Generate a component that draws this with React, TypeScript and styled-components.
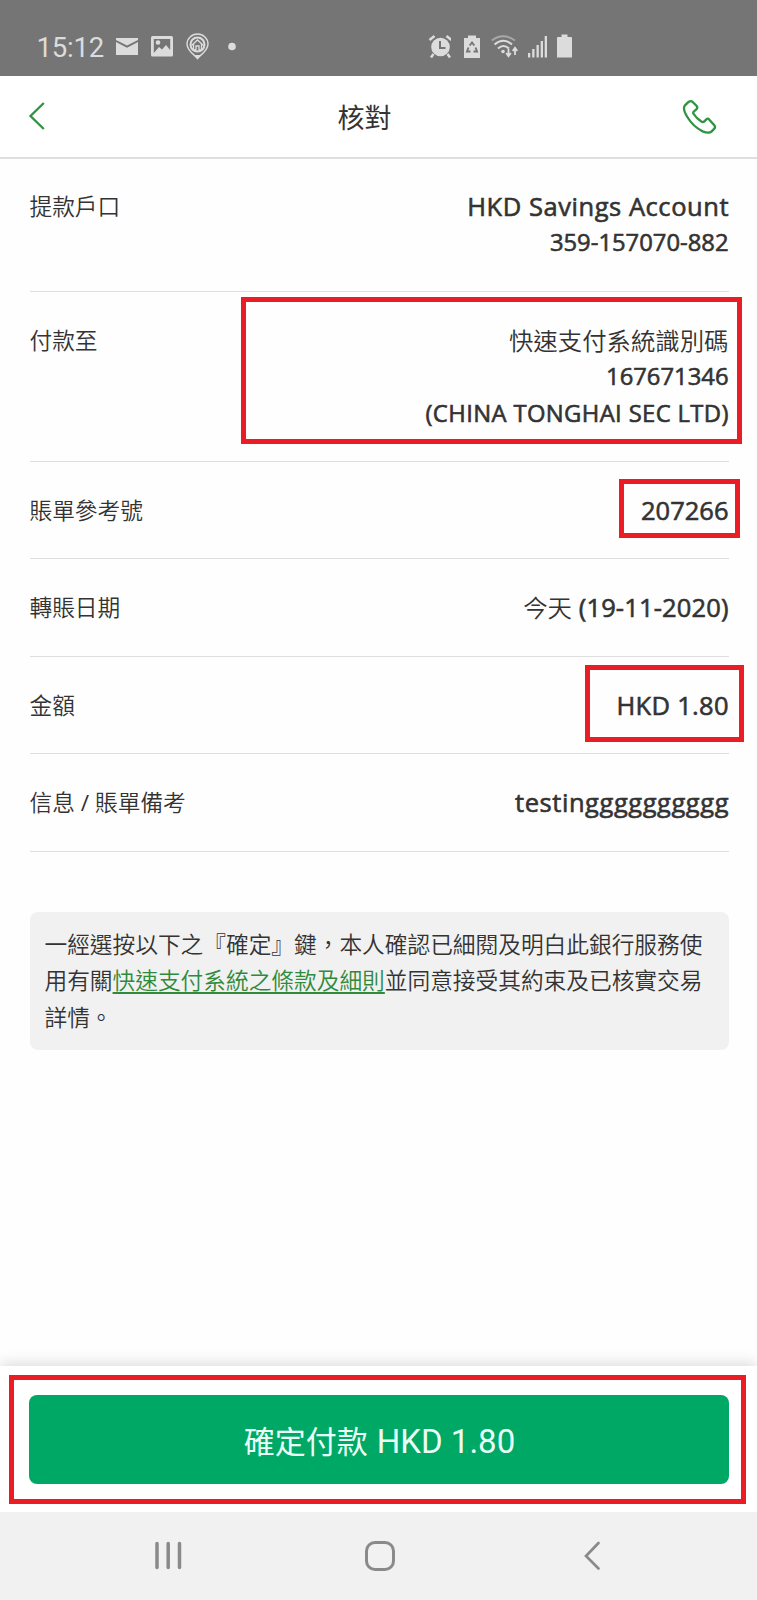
import React from "react";
import styled, { createGlobalStyle } from "styled-components";

const GlobalStyle = createGlobalStyle`
  * { box-sizing: border-box; }
  body {
    margin: 0;
    background: #fefefe;
    color: #333;
    font-family: "Open Sans", "Noto Sans CJK TC", sans-serif;
  }
`;

const Screen = styled.div`
  width: 757px;
  height: 1600px;
  display: flex;
  flex-direction: column;
  overflow: hidden;
  background: #fefefe;
`;

const StatusBar = styled.div`
  flex: none;
  display: flex;
  height: 76px;
  padding: 33px 184px 0 36.5px;
  justify-content: space-between;
  background: #757575;
  color: #dcdcdc;
`;

const StatusGroup = styled.div<{ $gap: number }>`
  display: flex;
  height: 28px;
  gap: ${(p) => p.$gap}px;
`;

const Clock = styled.span`
  width: 66px;
  font: 400 27.5px/29px Roboto, sans-serif;
  letter-spacing: -0.2px;
  white-space: nowrap;
`;

const Glyph = styled.svg`
  display: block;
  flex: none;
`;

const Header = styled.header`
  flex: none;
  display: grid;
  grid-template-columns: 60px 1fr 60px;
  align-items: center;
  height: 83px;
  padding: 0 28px;
  border-bottom: 2px solid #dfdfdf;
  background: #fff;
`;

const Title = styled.h1`
  margin: 0;
  padding: 3px 28px 0 0;
  font-size: 27px;
  font-weight: 400;
  line-height: 40px;
  text-align: center;
`;

const IconButton = styled.button<{ $end?: boolean }>`
  display: flex;
  justify-content: ${(p) => (p.$end ? "flex-end" : "flex-start")};
  padding: 0 ${(p) => (p.$end ? 11 : 0)}px 1px 0;
  border: 0;
  background: none;
`;

const Content = styled.main`
  flex: 1;
  margin-top: -1px;
  padding: 0 28.5px 0 29.5px;
`;

const Row = styled.div`
  position: relative;
  display: flex;
  justify-content: space-between;
  padding: 30px 0;
  border-bottom: 1px solid #dedede;
  line-height: 36.4px;
`;

const Label = styled.div`
  padding-top: 1px;
  height: 36.4px;
  font-size: 22.7px;
  font-weight: 350;
`;

const Slash = styled.span`
  font-weight: 400;
`;

const Values = styled.div`
  display: flex;
  flex-direction: column;
  align-items: flex-end;
`;

const Value = styled.div<{ $size?: number; $track?: number }>`
  height: 36.4px;
  font-size: ${(p) => p.$size ?? 25.5}px;
  font-weight: 400;
  -webkit-text-stroke: 0.6px currentColor;
  letter-spacing: ${(p) => p.$track ?? 0}px;
  margin-right: ${(p) => -(p.$track ?? 0)}px;
  white-space: nowrap;
`;

const Han = styled.span`
  font-size: 24.4px;
  font-weight: 350;
  letter-spacing: 0;
  -webkit-text-stroke: 0;
`;

const Highlight = styled.div<{ $top: number; $right: number; $w: number; $h: number }>`
  position: absolute;
  top: ${(p) => p.$top}px;
  right: ${(p) => p.$right}px;
  width: ${(p) => p.$w}px;
  height: ${(p) => p.$h}px;
  border: 5px solid #ea1d25;
  pointer-events: none;
`;

const Notice = styled.p`
  height: 138px;
  margin: 60px 0 0;
  padding: 15.5px 15px;
  border-radius: 8px;
  background: #f1f1f1;
  font-size: 22.7px;
  font-weight: 350;
  line-height: 36.4px;
`;

const TermsLink = styled.a`
  color: #2f8a3c;
  text-decoration: underline;
  text-decoration-thickness: 2px;
  text-underline-offset: 3px;
`;

const Footer = styled.footer`
  position: relative;
  flex: none;
  height: 146px;
  padding: 29px 28px 0 29px;
  background: #fff;
  box-shadow: 0 -2px 14px rgba(0, 0, 0, 0.15);
`;

const PayButton = styled.button`
  display: flex;
  align-items: center;
  justify-content: center;
  width: 100%;
  height: 89px;
  padding: 0 0 0 1px;
  border: 0;
  border-radius: 8px;
  background: #00a866;
  color: #e9fff6;
  gap: 9px;
`;

const PayLabel = styled.span`
  font: 400 31px/48px "Noto Sans CJK TC", sans-serif;
`;

const PayAmount = styled.span`
  padding-top: 5px;
  font: 400 33px/48px Roboto, sans-serif;
`;

const NavBar = styled.nav`
  position: relative;
  flex: none;
  display: grid;
  grid-template-columns: 1fr 30px 1fr;
  align-items: center;
  height: 88px;
  padding: 0 156px 0 158px;
  background: #f1f1f1;

  & > :first-child {
    margin-left: -4px;
  }
  & > :last-child {
    justify-self: end;
  }
`;

function StatusIcons() {
  return (
    <StatusBar>
      <StatusGroup $gap={13}>
        <Clock>15:12</Clock>
        <Glyph width="22" height="28" viewBox="0 0 22 28" fill="currentColor">
          <path d="M0 5h22v2L11 12.5 0 7z" />
          <path d="M0 9l11 5.8L22 9v13H0z" />
        </Glyph>
        <Glyph width="22" height="28" viewBox="0 0 22 28">
          <rect x="0" y="3" width="22" height="20.500" rx="1.5" fill="currentColor" />
          <path d="M2.800 6h16.400v11L15 12l-4 4.500L8 14l-5.200 6z" fill="#757575" />
          <circle cx="7" cy="9.500" r="2.300" fill="currentColor" />
        </Glyph>
        <Glyph width="23" height="28" viewBox="0 0 23 28" fill="none" stroke="currentColor">
          <path d="M11.500 25.500C9 22 1 18 1 11a10.500 10 0 0 1 21 0c0 7-8 11-10.500 14.500z" strokeWidth="1.400" />
          <circle cx="11.500" cy="11.500" r="7" strokeWidth="2" />
          <path d="M5.500 12.500l6-5.500 6 5.500M7.500 11v6h2.500v-4h3v4h2.500v-6" strokeWidth="1.300" />
          <path d="M8 22h7l-3.500 4z" fill="currentColor" stroke="none" />
        </Glyph>
        <Glyph width="32" height="28" viewBox="0 0 32 28">
          <circle cx="10" cy="13.500" r="3.800" fill="currentColor" />
        </Glyph>
      </StatusGroup>
      <StatusGroup $gap={10}>
        <Glyph width="24" height="28" viewBox="-.5 0 24 28">
          <circle cx="13" cy="14" r="9.300" fill="currentColor" />
          <path d="M2 7l5-4M24 7l-5-4M6 21l-2.500 3.500M20 21l2.500 3.500" stroke="currentColor" strokeWidth="2.500" />
          <path d="M12.500 8v7h5.500" fill="none" stroke="#757575" strokeWidth="2" />
        </Glyph>
        <Glyph width="19" height="28" viewBox="-3 0 19 28">
          <path d="M4 5V2.500h8V5h4v20H0V5z" fill="currentColor" />
          <path d="M5.700 12.500L8 9.500l2.300 3M11.500 14.500l1.500 4H9.500M6.500 18.500H3l1.500-4" fill="none" stroke="#757575" strokeWidth="1.900" />
        </Glyph>
        <Glyph width="28" height="28" viewBox="-1 0 28 28" fill="none" stroke="currentColor" strokeWidth="2">
          <path d="M.8 7.500Q12 -.8 24 7.500" opacity=".5" />
          <path d="M3.500 11.500Q12.500 4 21 11.500M7 15.500q5.500-5 11 0" />
          <circle cx="12" cy="18.500" r="1.800" fill="currentColor" stroke="none" />
          <path d="M17.500 16v7M24 22v-7M15.200 20l2.300 3.200 2.300-3.200M21.700 18l2.300-3.200 2.300 3.200" strokeWidth="1.800" />
        </Glyph>
        <Glyph width="19" height="28" viewBox="0 0 19 28" fill="currentColor">
          <rect x="0" y="20" width="2.300" height="4.500" />
          <rect x="4.200" y="16" width="2.300" height="8.500" />
          <rect x="8.500" y="12" width="2.300" height="12.500" />
          <rect x="12.700" y="8" width="2.300" height="16.500" />
          <rect x="16.700" y="3" width="2.300" height="21.500" />
        </Glyph>
        <Glyph width="16" height="28" viewBox="0 0 16 28" fill="currentColor">
          <path d="M4.500 4V1.500h6V4H14q1 0 1 1v19.500H0V5q0-1 1-1z" />
        </Glyph>
      </StatusGroup>
    </StatusBar>
  );
}

export default function App() {
  return (
    <Screen>
      <GlobalStyle />
      <StatusIcons />
      <Header>
        <IconButton aria-label="返回">
          <Glyph width="20" height="30" viewBox="0 0 20 30" fill="none" stroke="#2f9440" strokeWidth="2.300">
            <path d="M15.800 2L2.500 15l13.300 13" />
          </Glyph>
        </IconButton>
        <Title>核對</Title>
        <IconButton aria-label="電話" $end>
          <Glyph width="38" height="38" viewBox="0 0 114 114" fill="none" stroke="#2f9440" strokeWidth="7">
            <path d="M30 13q-3 0-6 3l-9 9C10 31 12 44 22 60c12 20 30 35 46 43 12 5 22 5 27 0l8-8q4-5 0-10L88 68q-4-6-9-1l-6 6q-4 4-8 1C54 67 46 59 41 51q-3-5 1-8l7-6q5-4 1-10L38 15q-4-4-8-2z" />
          </Glyph>
        </IconButton>
      </Header>
      <Content>
        <Row>
          <Label>提款戶口</Label>
          <Values>
            <Value $track={0.55}>HKD Savings Account</Value>
            <Value $size={23.8}>359-157070-882</Value>
          </Values>
        </Row>
        <Row>
          <Label>付款至</Label>
          <Values>
            <Value><Han>快速支付系統識別碼</Han></Value>
            <Value $size={23.8}>167671346</Value>
            <Value $size={23.8} $track={0.37}>(CHINA TONGHAI SEC LTD)</Value>
          </Values>
          <Highlight $top={5} $right={-13.5} $w={501} $h={147} />
        </Row>
        <Row>
          <Label>賬單參考號</Label>
          <Value>207266</Value>
          <Highlight $top={17} $right={-11.5} $w={121} $h={59} />
        </Row>
        <Row>
          <Label>轉賬日期</Label>
          <Value $track={0.15}><Han>今天</Han> (19-11-2020)</Value>
        </Row>
        <Row>
          <Label>金額</Label>
          <Value $track={0.3}>HKD 1.80</Value>
          <Highlight $top={8.5} $right={-15.5} $w={159} $h={77} />
        </Row>
        <Row>
          <Label>信息 <Slash>/</Slash> 賬單備考</Label>
          <Value $track={0.55}>testingggggggggg</Value>
        </Row>
        <Notice>
          一經選按以下之『確定』鍵，本人確認已細閱及明白此銀行服務使用有關<TermsLink>快速支付系統之條款及細則</TermsLink>並同意接受其約束及已核實交易詳情。
        </Notice>
      </Content>
      <Footer>
        <PayButton>
          <PayLabel>確定付款</PayLabel>
          <PayAmount>HKD 1.80</PayAmount>
        </PayButton>
        <Highlight $top={9} $right={11} $w={737} $h={129} />
      </Footer>
      <NavBar>
        <Glyph width="30" height="30" viewBox="0 0 30 30" stroke="#8a8a8a" strokeWidth="3.500" strokeLinecap="round">
          <path d="M3 2.500v24M14.200 2.500v24M25.500 2.500v24" />
        </Glyph>
        <Glyph width="30" height="30" viewBox="0 0 30 30" fill="none" stroke="#8a8a8a" strokeWidth="3">
          <rect x="1.500" y="1.500" width="27" height="27" rx="8.500" />
        </Glyph>
        <Glyph width="18" height="30" viewBox="0 0 18 30" fill="none" stroke="#8a8a8a" strokeWidth="2.700" strokeLinecap="round">
          <path d="M15.500 2L3 15l12.500 12.500" />
        </Glyph>
      </NavBar>
    </Screen>
  );
}
